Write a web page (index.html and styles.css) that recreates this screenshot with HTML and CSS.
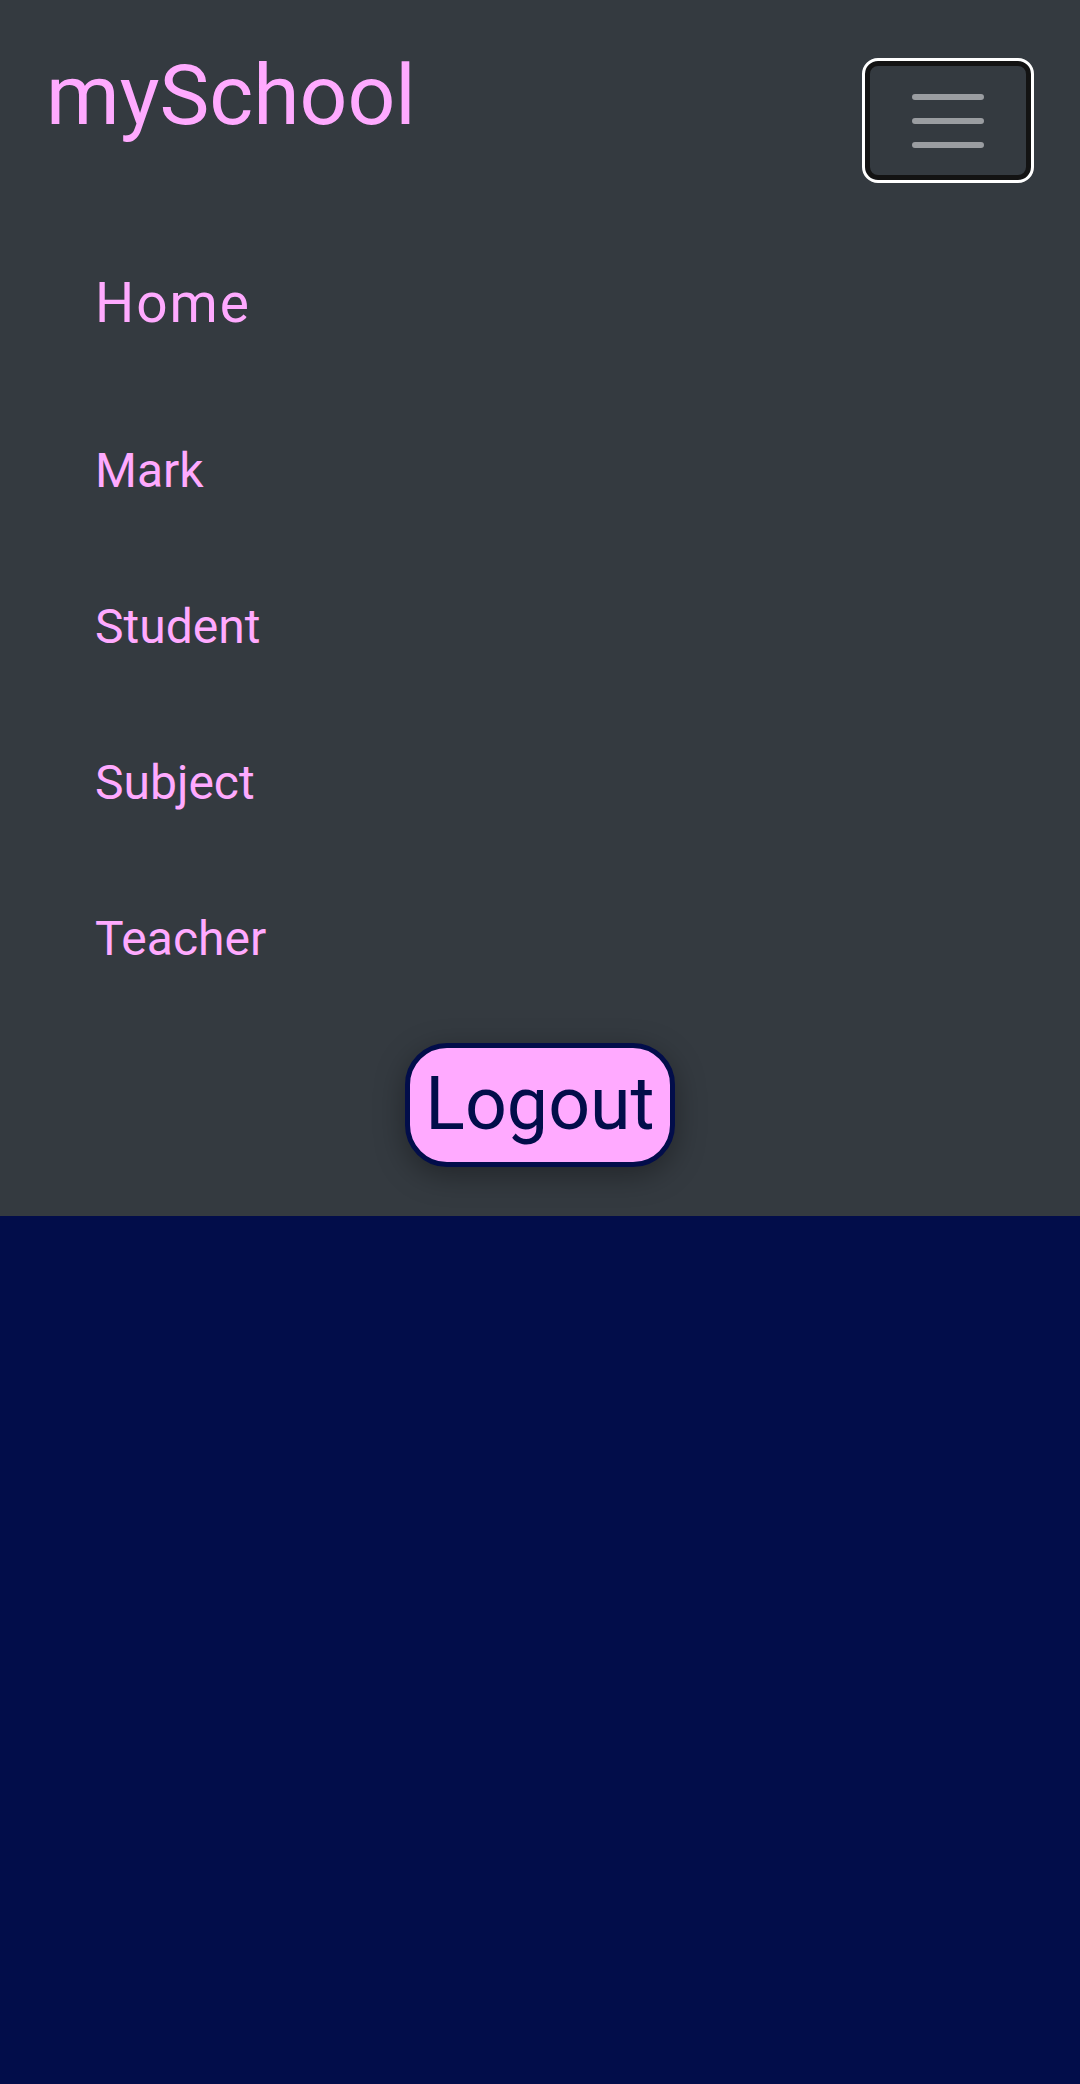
FILE: index.html
```html
<!DOCTYPE html>
<html lang="en">
<head>
<meta charset="utf-8">
<title>mySchool</title>
<link rel="stylesheet" href="styles.css">
</head>
<body>
<nav class="navbar">
  <div class="navbar-top">
    <a class="brand" href="#">mySchool</a>
    <button class="toggler" type="button" aria-label="Toggle navigation">
      <svg class="toggler-icon" width="72" height="54" viewBox="0 0 72 54">
        <path d="M3 3H69M3 27H69M3 51H69" stroke="#9a9da1" stroke-width="6" stroke-linecap="round" fill="none"/>
      </svg>
    </button>
  </div>
  <ul class="menu">
    <li class="menu-item menu-item-home"><a href="#">Home</a></li>
    <li class="menu-item"><a href="#">Mark</a></li>
    <li class="menu-item"><a href="#">Student</a></li>
    <li class="menu-item"><a href="#">Subject</a></li>
    <li class="menu-item"><a href="#">Teacher</a></li>
  </ul>
  <div class="logout-row">
    <button class="logout" type="button">Logout</button>
  </div>
</nav>
<main class="content"></main>
</body>
</html>
```

FILE: styles.css
```css
html, body {
  margin: 0;
  padding: 0;
}

body {
  background: #020d4a;
  min-height: 100vh;
  font-family: Roboto, "Noto Sans", "Liberation Sans", sans-serif;
}

a {
  text-decoration: none;
}

.navbar {
  background: #343a40;
  padding-bottom: 49px;
}

.navbar-top {
  display: flex;
  justify-content: space-between;
  align-items: flex-start;
  padding: 0 46px 0 46px;
}

.brand {
  margin-top: 46px;
  font-size: 84px;
  line-height: 1.2;
  color: #ffaaff;
}

.toggler {
  margin-top: 58px;
  width: 172px;
  height: 125px;
  box-sizing: border-box;
  border: 3px solid #ffffff;
  border-radius: 16px;
  box-shadow: inset 0 0 0 5px #131313;
  background: #343a40;
  padding: 0;
  display: flex;
  align-items: center;
  justify-content: center;
}

.toggler-icon {
  display: block;
}

.menu {
  list-style: none;
  margin: 79px 0 0 0;
  padding: 0 0 0 95px;
  display: flex;
  flex-direction: column;
  gap: 84px;
}

.menu-item a {
  display: block;
  font-size: 48px;
  line-height: 1.5;
  color: #ffaaff;
}

.menu-item-home {
  margin-bottom: 6px;
}

.menu-item-home a {
  font-size: 55px;
  letter-spacing: 2px;
}

.logout-row {
  display: flex;
  justify-content: center;
  margin-top: 68px;
}

.logout {
  width: 270px;
  height: 124px;
  box-sizing: border-box;
  border: 5px solid #020d4a;
  border-radius: 42px;
  background: #ffaaff;
  color: #020d4a;
  font-family: Roboto, "Noto Sans", "Liberation Sans", sans-serif;
  font-size: 73.5px;
  line-height: 1.172;
  padding: 0;
  box-shadow: 0 8px 30px rgba(0, 0, 0, 0.35);
}

.content {
  min-height: 860px;
}
```
